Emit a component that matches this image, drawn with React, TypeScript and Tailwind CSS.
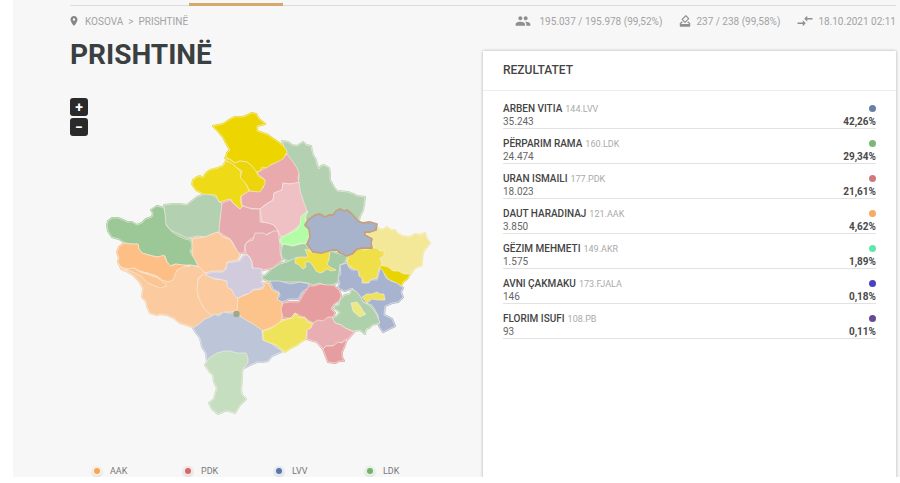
import { MdCompareArrows, MdHowToVote, MdLocationOn, MdPeople } from 'react-icons/md';
import { useState } from 'react';

const candidates = [
  { name: 'ARBEN VITIA', list: '144.LVV', votes: '35.243', share: '42,26%', color: 'bg-[#6780a8]' },
  { name: 'PËRPARIM RAMA', list: '160.LDK', votes: '24.474', share: '29,34%', color: 'bg-[#7fb57b]' },
  { name: 'URAN ISMAILI', list: '177.PDK', votes: '18.023', share: '21,61%', color: 'bg-[#cf7a7a]' },
  { name: 'DAUT HARADINAJ', list: '121.AAK', votes: '3.850', share: '4,62%', color: 'bg-[#f5ab62]' },
  { name: 'GËZIM MEHMETI', list: '149.AKR', votes: '1.575', share: '1,89%', color: 'bg-[#5ce8b0]' },
  { name: 'AVNI ÇAKMAKU', list: '173.FJALA', votes: '146', share: '0,18%', color: 'bg-[#4a40c4]' },
  { name: 'FLORIM ISUFI', list: '108.PB', votes: '93', share: '0,11%', color: 'bg-[#654a96]' },
];

const parties = [
  { name: 'AAK', dot: 'bg-[#f5a55c]', ring: 'bg-[#fdeedd]' },
  { name: 'PDK', dot: 'bg-[#cf6a6c]', ring: 'bg-[#f8e4e4]' },
  { name: 'LVV', dot: 'bg-[#5a76a6]', ring: 'bg-[#e3eaf3]' },
  { name: 'LDK', dot: 'bg-[#74b06e]', ring: 'bg-[#e2f3e0]' },
];

// Municipalities, painted in order: later ones cover earlier ones
const municipalities = [
  { id: 'podujeve', fill: '#b3d1b1', points: '282,141 288,142 292,145 297,146 303,142 306,145 311,146 312,151 313,155 316,160 317,165 319,169 321,166 324,165 329,168 330,173 330,180 334,187 337,191 348,192 353,194 357,196 365,197 364,205 363,210 360,216 358,224 340,222 322,222 306,220 303,210 299,195 298,185 299,175 296,168 287,155' },
  { id: 'mitrovice', fill: '#e8aaad', points: '287,154 293,162 297,168 299,173 298,178 299,183 290,184 283,183 282,190 274,193 273,200 266,204 260,209 248,208 242,205 241,196 248,191 255,191 263,188 265,180 257,173 268,166 278,161' },
  { id: 'leposaviq', fill: '#edd600', points: '213,126 223,124 229,120 235,117 243,117 248,115 252,113 256,114 259,119 265,124 261,125 257,126 257,131 268,135 278,142 282,145 286,149 287,152 283,159 275,163 270,165 267,168 262,167 260,171 256,172 251,165 247,162 240,161 235,163 230,159 226,157 227,153 230,150 226,143 223,137 218,131' },
  { id: 'zvecan', fill: '#ecd50a', points: '225,158 230,160 235,163 240,161 247,162 251,165 256,171 258,176 265,180 265,184 263,187 260,192 250,191 246,184 240,178 242,171 236,167 229,163' },
  { id: 'zubin-potok', fill: '#eeda16', points: '226,161 231,163 236,167 241,172 240,177 246,184 249,191 241,196 240,200 242,207 240,209 236,205 233,203 231,199 226,200 219,202 216,195 205,195 196,190 192,184 193,180 197,177 200,176 203,178 206,173 210,170 218,168 223,166' },
  { id: 'istog', fill: '#b3d1b1', points: '164,205 172,204 180,204 187,205 192,201 197,197 205,194 212,195 217,198 219,202 222,203 222,211 220,220 221,227 219,232 212,234 206,237 198,236 187,238 179,234 170,230 165,223' },
  { id: 'skenderaj', fill: '#e6a9ad', points: '222,203 230,200 236,206 240,209 243,206 252,209 260,209 260,222 270,223 275,226 279,232 269,233 263,237 255,236 248,241 245,245 244,253 238,253 233,243 230,239 219,232 220,220' },
  { id: 'vushtrri', fill: '#efc0c4', points: '283,183 290,184 299,182 300,190 303,200 307,211 302,217 300,225 288,234 281,237 278,231 274,225 268,223 262,222 260,209 268,203 273,200 274,193 282,190' },
  { id: 'klina', fill: '#fbc99c', points: '192,239 205,237 212,234 218,232 223,237 230,239 234,246 240,255 237,260 227,262 226,268 223,271 212,271 205,273 199,267 192,257 193,247' },
  { id: 'drenas', fill: '#e8b0b4', points: '278,231 273,231 267,235 263,233 255,233 253,240 247,242 245,246 246,253 250,257 252,262 253,268 263,270 273,268 282,260 280,252 280,245 279,238' },
  { id: 'peje', fill: '#9cc898', points: '107,225 108,221 112,218 118,218 123,220 127,222 132,222 137,225 142,223 146,219 152,217 153,213 151,210 157,206 164,208 165,214 166,225 172,232 178,236 185,239 190,240 192,245 190,252 195,260 198,266 190,265 182,265 175,264 170,266 167,262 165,256 158,257 153,256 142,253 139,249 138,244 131,244 125,243 119,239 112,237 108,231' },
  { id: 'gjakove', fill: '#fbcb9f', points: '119,263 125,270 140,271 157,277 168,282 173,277 177,269 183,266 190,265 199,267 205,273 198,278 198,297 205,307 213,316 205,320 201,325 195,328 187,325 180,323 174,318 167,315 160,314 157,315 150,313 147,306 146,301 142,297 143,288 139,281 133,275 126,271 121,269' },
  { id: 'decan', fill: '#fdbf85', points: '124,243 131,244 138,244 139,249 142,253 152,256 158,257 164,255 167,262 171,266 176,264 183,265 190,266 183,267 177,270 175,275 173,280 168,282 162,280 157,276 148,273 140,271 134,268 130,270 125,268 121,267 118,262 119,258 117,252 119,247' },
  { id: 'junik', fill: '#fbc592', points: '125,269 134,268 140,272 150,275 158,278 167,286 160,288 148,283 141,276 135,273' },
  { id: 'rahovec', fill: '#fbcb9f', points: '205,272 213,279 225,280 232,290 238,298 238,305 237,311 230,312 225,312 213,316 205,310 199,299 197,290 198,280' },
  { id: 'suhareke', fill: '#fcc38b', points: '238,298 245,295 255,290 263,289 264,283 268,283 272,290 279,293 277,299 282,301 283,310 282,317 280,323 272,327 262,331 253,325 242,318 237,311' },
  { id: 'prizren', fill: '#bcc6d8', points: '193,328 199,324 205,319 210,317 215,314 219,316 223,312 228,313 232,313 240,316 246,320 253,324 262,330 263,340 271,343 277,348 283,351 272,356 268,361 263,362 257,362 250,365 240,370 212,372 207,362 206,353 202,347 200,338 196,333' },
  { id: 'dragash', fill: '#c5dec0', points: '205,365 209,358 217,353 224,351 230,351 237,353 246,353 248,358 248,363 244,367 242,372 242,380 241,390 242,395 246,399 240,405 235,413 229,411 225,411 218,414 212,409 209,403 214,399 215,395 217,388 214,382 213,375 209,371' },
  { id: 'malisheve', fill: '#d2cbde', points: '205,275 212,272 223,272 226,269 227,263 233,262 240,261 243,256 247,255 250,258 252,263 252,268 257,268 262,269 261,274 264,277 261,282 265,286 258,289 253,289 250,293 244,295 238,298 234,295 232,290 227,287 227,281 223,280 213,278' },
  { id: 'fushe-kosove', fill: '#a8cba8', points: '283,244 293,246 305,243 308,248 310,257 298,260 289,261 282,258 281,252' },
  { id: 'lipjan', fill: '#a5cba6', points: '261,277 266,275 273,268 280,264 287,262 297,257 308,260 325,256 330,251 340,254 347,256 345,263 340,265 338,282 332,285 327,286 320,283 313,285 308,283 300,282 285,282 273,282 265,280' },
  { id: 'gracanice', fill: '#f0df3f', points: '305,249 313,253 322,253 330,250 329,260 327,264 330,267 336,270 331,271 327,269 323,272 320,273 316,271 313,266 310,262 305,262 306,267 303,269 299,265 295,263 295,259 300,257 308,257' },
  { id: 'obiliq', fill: '#b2fda6', points: '308,211 305,218 306,223 309,232 309,237 305,244 300,243 293,246 287,244 282,244 280,240 284,236 288,234 297,230 300,224 301,216' },
  { id: 'dardane', fill: '#f2e897', points: '365,232 372,230 377,228 382,230 387,227 391,230 395,230 398,234 402,236 410,237 415,234 420,235 425,233 427,239 430,243 425,249 423,253 422,259 422,265 415,268 410,275 397,272 380,267 377,256 373,248 372,239' },
  { id: 'ranillug', fill: '#e8d400', points: '380,265 388,267 393,271 398,271 404,274 410,274 407,279 403,282 401,286 394,282 388,279 384,273 379,270' },
  { id: 'novoberde', fill: '#efe04a', points: '348,257 357,249 364,250 372,248 377,248 380,251 384,251 384,256 380,258 382,264 380,267 378,272 377,278 370,280 368,283 363,283 362,278 358,277 359,272 355,271 352,267 347,265' },
  { id: 'gjilan', fill: '#a7b3cf', points: '340,265 347,263 349,268 352,270 358,270 359,276 362,278 362,283 369,283 371,280 377,280 379,273 380,268 383,271 386,278 391,281 397,283 403,288 401,292 403,297 398,302 392,303 385,306 384,315 392,319 395,326 389,329 383,332 379,326 378,315 372,305 363,302 358,294 352,288 345,291 338,288 340,283 338,278 341,274' },
  { id: 'partesh', fill: '#eee15c', points: '362,297 367,294 372,294 377,292 380,294 384,294 385,300 378,300 372,299 367,303' },
  { id: 'shtime', fill: '#a8b4cf', points: '270,281 280,281 290,284 300,282 309,284 308,288 302,292 298,299 289,299 282,302 277,299 280,296 279,292 273,289' },
  { id: 'ferizaj', fill: '#e69da0', points: '309,286 314,286 320,284 327,285 333,285 339,290 341,295 340,300 334,304 331,309 335,313 332,318 323,322 313,323 303,317 295,313 290,318 283,318 281,309 283,303 290,302 299,302 303,295' },
  { id: 'shterpce', fill: '#f0e35c', points: '280,322 288,319 293,318 295,313 299,318 305,317 307,322 313,324 311,328 307,330 306,339 301,342 297,345 291,348 285,352 281,349 277,345 270,343 263,340 263,331 270,329' },
  { id: 'viti', fill: '#aed0ab', points: '332,318 337,316 340,312 335,309 333,307 339,305 340,300 345,295 350,294 352,289 357,292 360,296 363,302 369,305 373,309 377,315 380,323 372,325 369,328 366,329 365,334 360,330 353,331 345,328 341,325 335,323' },
  { id: 'kllokot', fill: '#eae983', points: '351,303 357,302 361,307 363,311 366,314 360,317 356,314 353,311' },
  { id: 'kacanik', fill: '#e9aeb1', points: '313,323 318,320 323,321 328,317 332,317 335,323 341,325 345,328 354,332 348,339 342,342 333,346 326,346 323,349 317,342 313,341 307,339 307,330 311,328' },
  { id: 'hani-i-elezit', fill: '#e69da0', points: '323,349 326,346 333,346 338,342 342,343 347,339 345,345 342,352 342,357 344,361 339,361 335,363 328,362 326,357' },
];

const prishtina =
  '305,225 308,220 315,215 320,214 325,217 329,215 333,215 336,211 340,209 344,211 347,210 352,214 358,221 363,223 370,222 377,224 376,230 370,232 365,232 365,235 372,239 371,243 372,248 363,248 357,249 352,254 347,256 340,253 337,250 332,250 322,253 313,252 309,247 307,244 310,237 309,229';

const KosovoMap = () => (
  <svg viewBox="106 111 326 305" className="w-full max-w-[326px]" role="img" aria-label="Kosova">
    <g strokeLinejoin="round">
      {/* Soft fill under the borders, so that no gap shows between neighbours */}
      {municipalities.map((m) => (
        <polygon key={m.id} points={m.points} fill={m.fill} stroke={m.fill} strokeWidth="2" />
      ))}
      {municipalities.map((m) => (
        <polygon key={m.id} points={m.points} fill={m.fill} stroke="#f6efe2" strokeOpacity="0.75" strokeWidth="0.8" />
      ))}
    </g>
    <circle cx="236.5" cy="314" r="3.2" fill="#a0a88a" />
    <polygon points={prishtina} fill="#a7b2cb" stroke="#c2a183" strokeWidth="1.8" strokeLinejoin="round" />
  </svg>
);

export default function App() {
  const [zoom, setZoom] = useState(1);

  return (
    <div className="bg-white pb-[6px] pl-[13px] font-['Roboto',sans-serif]">
      <div className="overflow-hidden bg-[#f7f7f7] pl-[57px] pr-1">
        {/* Active tab marker */}
        <div className="flex h-[6px] items-end border-b border-[#dcdcdc]">
          <div className="-mb-px ml-[119px] h-[3px] w-[94px] bg-[#d3aa6c]" />
        </div>

        {/* Breadcrumb and counters */}
        <div className="flex h-[30px] items-center justify-between text-[10px] text-[#a3a3a3]">
          <nav className="flex items-center">
            <MdLocationOn className="-ml-0.5 mr-1 size-3 text-[#858585]" />
            <a href="#kosova" className="ml-px">KOSOVA</a>
            <span className="mx-[5px]">&gt;</span>
            <a href="#prishtine">PRISHTINË</a>
          </nav>
          <div className="flex items-center gap-4">
            <span className="flex items-center gap-2">
              <MdPeople className="size-4 text-[#8f8f8f]" />
              195.037 / 195.978 (99,52%)
            </span>
            <span className="flex items-center gap-1">
              <MdHowToVote className="size-[14px] text-[#8f8f8f]" />
              237 / 238 (99,58%)
            </span>
            <span className="flex items-center gap-1">
              <MdCompareArrows className="size-[18px] text-[#8f8f8f]" />
              18.10.2021 02:11
            </span>
          </div>
        </div>

        <div className="grid grid-cols-2">
          <div>
            <h1 className="text-[28px] font-bold leading-[38px] text-[#3a3f42]">PRISHTINË</h1>

            {/* Map */}
            <div className="mt-6 flex items-start">
              <div className="flex flex-col gap-0.5">
                <button
                  aria-label="Zoom in"
                  onClick={() => setZoom(zoom + 1)}
                  className="flex size-[18px] items-center justify-center rounded-[3px] bg-[#2a2a2a] text-sm font-bold leading-none text-white"
                >
                  +
                </button>
                <button
                  aria-label="Zoom out"
                  onClick={() => setZoom(Math.max(1, zoom - 1))}
                  className="flex size-[18px] items-center justify-center rounded-[3px] bg-[#2a2a2a] text-sm font-bold leading-none text-white"
                >
                  −
                </button>
              </div>
              <div className="ml-[18px] mt-[13px] grow">
                <KosovoMap />
              </div>
            </div>

            {/* Legend */}
            <ul className="ml-[22px] mt-[49px] flex">
              {parties.map((party) => (
                <li key={party.name} className="flex w-[91px] items-center gap-2 text-[9px] leading-3 text-[#777]">
                  <span className={`flex size-[10px] items-center justify-center rounded-full shadow ${party.ring}`}>
                    <span className={`size-[6px] rounded-full ${party.dot}`} />
                  </span>
                  {party.name}
                </li>
              ))}
            </ul>
          </div>

          {/* Results */}
          <section className="-mb-2 mt-[15px] bg-white shadow-[0_0_3px_rgba(0,0,0,0.3)]">
            <h2 className="border-b border-[#ededed] px-5 py-3 text-xs font-medium leading-[15px] text-[#444]">
              REZULTATET
            </h2>
            <ul className="px-5 pt-[3px]">
              {candidates.map((candidate) => (
                <li key={candidate.name} className="border-b border-[#e2e2e2] pt-2 text-[10px] leading-[13px]">
                  <div className="flex h-[13px] items-center justify-between">
                    <span className="flex items-baseline gap-[3px] font-medium text-[#444]">
                      {candidate.name}
                      <span className="text-[9px] font-normal text-[#aaa]">{candidate.list}</span>
                    </span>
                    <span className={`size-[7px] rounded-full ${candidate.color}`} />
                  </div>
                  <div className="flex justify-between text-[#666]">
                    <span>{candidate.votes}</span>
                    <span className="font-bold text-[#4a4a4a]">{candidate.share}</span>
                  </div>
                </li>
              ))}
            </ul>
          </section>
        </div>
      </div>
    </div>
  );
}
